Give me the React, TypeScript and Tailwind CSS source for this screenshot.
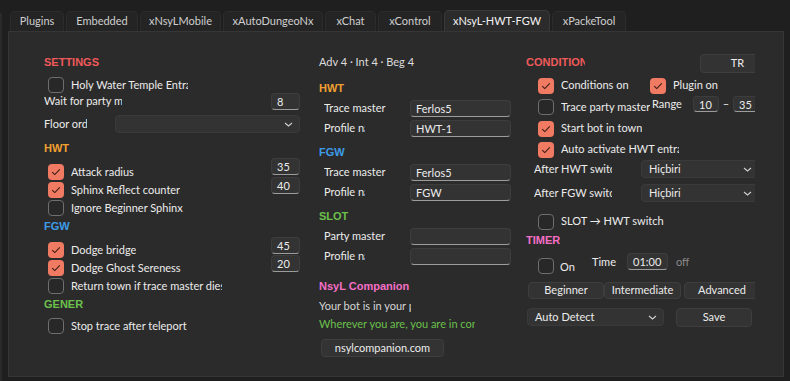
const TABS = [
  { name: "Plugins", w: "w-[54px]" },
  { name: "Embedded", w: "w-[72px]" },
  { name: "xNsyLMobile", w: "w-[81px]" },
  { name: "xAutoDungeoNx", w: "w-[100px]" },
  { name: "xChat", w: "w-[51px]" },
  { name: "xControl", w: "w-[64px]" },
  { name: "xNsyL-HWT-FGW", w: "w-[106px]", active: true },
  { name: "xPackeTool", w: "w-[74px]" },
];

const HEAD = "h-[14px] leading-[14px] text-[11px] font-bold font-['Liberation_Sans',sans-serif] whitespace-nowrap overflow-hidden";

function Box({ on }: { on?: boolean }) {
  if (on) {
    return (
      <span className="flex h-[16px] w-[16px] shrink-0 items-center justify-center rounded-[4px] bg-[#f07a62]">
        <svg width="10" height="8" viewBox="0 0 10 8">
          <path d="M1.2 4.2 L3.8 6.6 L8.8 1.4" fill="none" stroke="#3a1c15" strokeWidth="1.1" />
        </svg>
      </span>
    );
  }
  return <span className="h-[16px] w-[16px] shrink-0 rounded-[4px] border-[1.5px] border-[#6e6e6e] bg-[#282828]" />;
}

function Check({ on, label, cls = "", lw = "" }: { on?: boolean; label: string; cls?: string; lw?: string }) {
  return (
    <div className={"flex items-center " + cls}>
      <Box on={on} />
      <span className={"ml-[7px] overflow-hidden whitespace-nowrap " + lw}>{label}</span>
    </div>
  );
}

function Field({ v = "", cls = "" }: { v?: string; cls?: string }) {
  return (
    <div className={"shrink-0 overflow-hidden whitespace-nowrap rounded-[4px] border border-[#3d3d3d] border-b-[#9c9c9c] bg-[#333333] pl-[5px] leading-[15px] text-[#ececec] " + cls}>
      {v}
    </div>
  );
}

function Chevron() {
  return (
    <svg width="9" height="5" viewBox="0 0 9 5" className="shrink-0">
      <path d="M1 1 L4.5 4 L8 1" fill="none" stroke="#d0d0d0" strokeWidth="1.1" />
    </svg>
  );
}

function Select({ v = "", cls = "" }: { v?: string; cls?: string }) {
  return (
    <div className={"flex shrink-0 items-center justify-between rounded-[4px] border border-[#3a3a3a] bg-[#333333] pl-[7px] pr-[6px] text-[#ececec] " + cls}>
      <span className="whitespace-nowrap">{v}</span>
      <Chevron />
    </div>
  );
}

function Btn({ label, cls = "" }: { label: string; cls?: string }) {
  return (
    <div className={"flex shrink-0 items-center justify-center rounded-[4px] border border-[#3e3e3e] bg-[#333333] text-[#ececec] " + cls}>
      {label}
    </div>
  );
}

function Row({ label, lw, v }: { label: string; lw: string; v?: string }) {
  return (
    <div className="flex h-[17px] items-center">
      <div className="w-[92px] pl-[6px]">
        <div className={"overflow-hidden whitespace-nowrap " + lw}>{label}</div>
      </div>
      <Field v={v} cls="h-[17px] w-[101px]" />
    </div>
  );
}

export default function App() {
  return (
    <div className="flex h-[381px] w-[790px] overflow-hidden bg-[#1f1f1f] text-[11px] text-[#ececec] font-['Lato',sans-serif]">
      <div className="mt-[13px] w-[2px] bg-[#2a2a2a]" />
      <div className="ml-[6px] flex flex-col">
        {/* tabs */}
        <div className="ml-[2px] mt-[10px] flex h-[21px] items-end gap-[2px]">
          {TABS.map((t) => (
            <div
              key={t.name}
              className={
                "flex items-center justify-center rounded-t-[5px] border border-b-0 whitespace-nowrap " +
                t.w +
                (t.active
                  ? " h-[21px] border-[#393939] bg-[#2b2b2b] text-[#f2f2f2]"
                  : " h-[20px] border-[#2c2c2c] bg-[#242424] text-[#cfcfcf]")
              }
            >
              {t.name}
            </div>
          ))}
        </div>

        {/* panel */}
        <div className="h-[346px] w-[776px] border border-[#363636] bg-[#2b2b2b]">
          <div className="flex w-[746px] overflow-hidden">
            {/* left column */}
            <div className="ml-[35px] flex w-[256px] flex-col">
              <div className={HEAD + " mt-[23px] text-[#f05a5a]"}>SETTINGS</div>
              <Check label="Holy Water Temple Entrance" cls="mt-[8px] h-[16px] pl-[4px]" lw="w-[117px]" />
              <div className="flex h-[17px] items-center justify-between">
                <div className="w-[78px] overflow-hidden whitespace-nowrap">Wait for party members</div>
                <Field v="8" cls="h-[17px] w-[29px]" />
              </div>
              <div className="mt-[5px] flex h-[18px] items-center justify-between">
                <div className="w-[43px] overflow-hidden whitespace-nowrap">Floor order</div>
                <Select cls="h-[18px] w-[185px]" />
              </div>

              <div className={HEAD + " mt-[8px] text-[#f0a030]"}>HWT</div>
              <div className="mt-[3px] flex justify-between">
                <div className="flex flex-col pt-[5px] pl-[4px]">
                  <Check on label="Attack radius" cls="h-[18px]" />
                  <Check on label="Sphinx Reflect counter" cls="h-[18px]" />
                  <Check label="Ignore Beginner Sphinx" cls="h-[18px]" />
                </div>
                <div className="flex flex-col gap-[2px]">
                  <Field v="35" cls="h-[17px] w-[29px]" />
                  <Field v="40" cls="h-[17px] w-[29px]" />
                </div>
              </div>

              <div className={HEAD + " mt-[2px] text-[#3d9be9]"}>FGW</div>
              <div className="mt-[4px] flex justify-between">
                <div className="flex flex-col pt-[4px] pl-[4px]">
                  <Check on label="Dodge bridge" cls="h-[18px]" />
                  <Check on label="Dodge Ghost Sereness" cls="h-[18px]" />
                  <Check label="Return town if trace master dies" cls="h-[18px]" lw="w-[151px]" />
                </div>
                <div className="flex flex-col gap-[1px]">
                  <Field v="45" cls="h-[17px] w-[29px]" />
                  <Field v="20" cls="h-[17px] w-[29px]" />
                </div>
              </div>

              <div className={HEAD + " mt-[2px] w-[39px] text-[#6cc04c]"}>GENERAL</div>
              <Check label="Stop trace after teleport" cls="mt-[7px] h-[16px] pl-[4px]" />
            </div>

            {/* middle column */}
            <div className="ml-[18px] flex w-[194px] flex-col">
              <div className="mt-[23px] h-[14px] whitespace-nowrap pl-[1px] leading-[14px] text-[#dcdcdc]">Adv 4 · Int 4 · Beg 4</div>

              <div className={HEAD + " mt-[12px] pl-[1px] text-[#f0a030]"}>HWT</div>
              <div className="mt-[5px]"><Row label="Trace master" lw="w-[62px]" v="Ferlos5" /></div>
              <div className="mt-[3px]"><Row label="Profile name" lw="w-[41px]" v="HWT-1" /></div>

              <div className={HEAD + " mt-[8px] pl-[1px] text-[#3d9be9]"}>FGW</div>
              <div className="mt-[5px]"><Row label="Trace master" lw="w-[62px]" v="Ferlos5" /></div>
              <div className="mt-[3px]"><Row label="Profile name" lw="w-[41px]" v="FGW" /></div>

              <div className={HEAD + " mt-[8px] pl-[1px] text-[#6cc04c]"}>SLOT</div>
              <div className="mt-[5px]"><Row label="Party master" lw="w-[62px]" /></div>
              <div className="mt-[3px]"><Row label="Profile name" lw="w-[41px]" /></div>

              <div className={HEAD + " mt-[14px] pl-[1px] text-[#f46fc6]"}>NsyL Companion</div>
              <div className="mt-[5px] h-[16px] w-[93px] overflow-hidden whitespace-nowrap pl-[1px] leading-[16px] text-[#d6d6d6]">Your bot is in your pocket</div>
              <div className="mt-[2px] h-[16px] w-[157px] overflow-hidden whitespace-nowrap pl-[1px] leading-[16px] text-[#6cc04c]">Wherever you are, you are in control</div>
              <Btn label="nsylcompanion.com" cls="ml-[3px] mt-[7px] h-[18px] w-[123px]" />
            </div>

            {/* right column */}
            <div className="ml-[14px] flex w-[229px] flex-col overflow-hidden">
              <div className="mt-[22px] flex h-[19px] items-start">
                <div className={HEAD + " mt-[1px] w-[59px] shrink-0 text-[#f05a5a]"}>CONDITIONS</div>
                <Btn label="TR" cls="ml-[115px] h-[19px] w-[75px]" />
              </div>

              <div className="mt-[4px] flex h-[17px] items-center">
                <div className="w-[124px] shrink-0 pl-[12px]"><Check on label="Conditions on" /></div>
                <Check on label="Plugin on" />
              </div>

              <div className="mt-[2px] flex h-[19px] items-start">
                <div className="w-[126px] shrink-0 pl-[12px] pt-[3px]"><Check label="Trace party master" lw="w-[89px]" /></div>
                <div className="w-[41px] shrink-0 leading-[16px]">Range</div>
                <Field v="10" cls="h-[16px] w-[26px]" />
                <div className="w-[14px] shrink-0 text-center leading-[16px]">–</div>
                <Field v="35" cls="h-[16px] w-[30px]" />
              </div>

              <Check on label="Start bot in town" cls="mt-[5px] h-[17px] pl-[12px]" />
              <Check on label="Auto activate HWT entrance" cls="mt-[4px] h-[17px] pl-[12px]" lw="w-[118px]" />

              <div className="mt-[2px] flex h-[18px] items-center">
                <div className="w-[115px] shrink-0 pl-[8px]"><div className="w-[78px] overflow-hidden whitespace-nowrap">After HWT switch</div></div>
                <Select v="Hiçbiri" cls="h-[18px] w-[118px]" />
              </div>
              <div className="mt-[6px] flex h-[18px] items-center">
                <div className="w-[115px] shrink-0 pl-[8px]"><div className="w-[78px] overflow-hidden whitespace-nowrap">After FGW switch</div></div>
                <Select v="Hiçbiri" cls="h-[18px] w-[118px]" />
              </div>

              <Check label="SLOT → HWT switch" cls="mt-[11px] h-[17px] pl-[12px]" />

              <div className={HEAD + " mt-[3px] text-[#f46fc6]"}>TIMER</div>

              <div className="mt-[6px] flex h-[20px] items-start">
                <div className="flex w-[66px] shrink-0 items-center pl-[12px] pt-[4px]">
                  <Box />
                  <span className="ml-[6px] mt-[2px]">On</span>
                </div>
                <div className="w-[35px] shrink-0 pt-[1px] leading-[16px]">Time</div>
                <Field v="01:00" cls="h-[17px] w-[41px]" />
                <div className="ml-[8px] pt-[1px] leading-[16px] text-[#8a8a8a]">off</div>
              </div>

              <div className="mt-[9px] flex h-[17px] pl-[2px]">
                <Btn label="Beginner" cls="h-[17px] w-[76px]" />
                <Btn label="Intermediate" cls="h-[17px] w-[77px]" />
                <Btn label="Advanced" cls="ml-[3px] h-[17px] w-[76px]" />
              </div>

              <div className="mt-[9px] flex items-start pl-[1px]">
                <Select v="Auto Detect" cls="h-[18px] w-[137px]" />
                <Btn label="Save" cls="ml-[12px] h-[19px] w-[76px]" />
              </div>
            </div>
          </div>
        </div>
      </div>
    </div>
  );
}
